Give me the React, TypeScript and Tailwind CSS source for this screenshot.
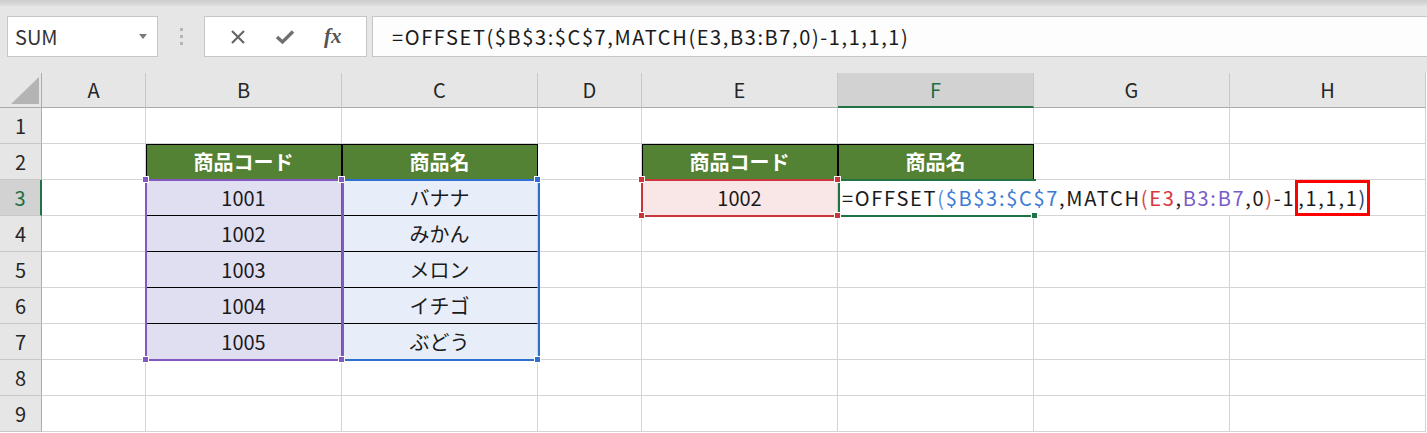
import type { ReactNode } from 'react';
import clsx from 'clsx';

// Column letters and widths used by the sheet grid
const COLS = ['A', 'B', 'C', 'D', 'E', 'F', 'G', 'H'];

const CODES = ['1001', '1002', '1003', '1004', '1005'];
const NAMES = ['バナナ', 'みかん', 'メロン', 'イチゴ', 'ぶどう'];

interface CellSpec {
  text?: ReactNode;
  className?: string;
}

// Returns content + style for a data cell (row 1-based, col 0-based A..H)
function getCell(row: number, col: number): CellSpec {
  const header = 'bg-[#548235] text-white font-bold border-r-black border-b-black shadow-[inset_1px_1px_0_#000]';
  if (row === 2) {
    if (col === 1 || col === 4) return { text: '商品コード', className: header };
    if (col === 2 || col === 5) return { text: '商品名', className: header };
  }
  if (row >= 3 && row <= 7) {
    const i = row - 3;
    const inner = row < 7 ? 'border-b-black' : '';
    if (col === 1) return { text: CODES[i], className: clsx('bg-[#e0dff2]', inner) };
    if (col === 2) return { text: NAMES[i], className: clsx('bg-[#e8eef9]', inner) };
  }
  if (row === 3 && col === 4) return { text: '1002', className: 'bg-[#f9e7e7]' };
  return {};
}

function Handle({ x, y, color }: { x: string; y: string; color: string }) {
  return <div className={clsx('absolute w-[7px] h-[7px] border border-white z-30', x, y, color)} />;
}

function Formula({ boxed }: { boxed?: boolean }) {
  return (
    <span className="tracking-[1.7px]">
      <span>=OFFSET</span>
      <span className="text-[#5b8fd6]">(</span>
      <span className="text-[#3c7bd4]">$B$3:$C$7</span>
      <span>,MATCH</span>
      <span className="text-[#d04a4a]">(</span>
      <span className="text-[#d9383a]">E3</span>
      <span>,</span>
      <span className="text-[#7a5cc8]">B3:B7</span>
      <span>,0</span>
      <span className="text-[#d04a4a]">)</span>
      <span>-1</span>
      {boxed ? (
        <span className="inline-flex items-center h-[36px] border-[3px] border-[#ff0000] -my-[2px]">
          <span>,1,1,1</span>
          <span className="text-[#24406e]">)</span>
        </span>
      ) : (
        <>
          <span>,1,1,1</span>
          <span>)</span>
        </>
      )}
    </span>
  );
}

function FormulaBar() {
  return (
    <div className="h-[73px] bg-[#e6e6e6] flex flex-col">
      <div className="h-[6px] bg-gradient-to-b from-[#cdcdcd] to-[#e0e0e0]" />
      <div className="mt-[10px] h-[41px] flex items-stretch">
        {/* Name box */}
        <div className="ml-[7px] w-[151px] bg-white border border-[#c6c6c6] flex items-center justify-between pl-[7px] pr-[10px]">
          <span className="text-[20px] text-[#333]">SUM</span>
          <svg width="8" height="5" viewBox="0 0 8 5">
            <path d="M0 0 H8 L4 5 Z" fill="#7a7a7a" />
          </svg>
        </div>
        {/* Grip dots */}
        <div className="w-[46px] flex flex-col items-center justify-center gap-[4px]">
          <div className="w-[3px] h-[3px] bg-[#b5b5b5]" />
          <div className="w-[3px] h-[3px] bg-[#b5b5b5]" />
          <div className="w-[3px] h-[3px] bg-[#b5b5b5]" />
        </div>
        {/* Cancel / enter / fx */}
        <div className="w-[163px] bg-white border border-[#c6c6c6] flex items-center justify-around px-[10px]">
          <svg width="16" height="16" viewBox="0 0 16 16">
            <path d="M2 2 L14 14 M14 2 L2 14" stroke="#666" strokeWidth="2.2" />
          </svg>
          <svg width="20" height="16" viewBox="0 0 20 16">
            <path d="M2 8 L7.5 13 L18 2.5" stroke="#707070" strokeWidth="3.4" fill="none" />
          </svg>
          <span className="font-[family-name:'Liberation_Serif',serif] italic font-bold text-[21px] text-[#555] leading-none">
            fx
          </span>
        </div>
        {/* Formula input */}
        <div className="ml-[5px] flex-1 bg-[#fdfdfd] border border-r-0 border-[#c6c6c6] flex items-center pl-[19px] text-[20px] text-[#1a1a1a]">
          <span className="tracking-[1.6px]">=OFFSET($B$3:$C$7,MATCH(E3,B3:B7,0)-1,1,1,1)</span>
        </div>
      </div>
    </div>
  );
}

function Sheet() {
  const rows = [1, 2, 3, 4, 5, 6, 7, 8, 9];
  return (
    <div className="relative grid grid-cols-[42px_104px_196px_196px_104px_196px_196px_196px_196px] grid-rows-[35px_repeat(9,36px)] bg-white">
      {/* corner */}
      <div className="relative bg-[#e6e6e6] border-r border-b border-[#ababab]">
        <svg className="absolute left-[11px] top-[4px]" width="28" height="27" viewBox="0 0 28 27">
          <path d="M0 27 L28 27 L28 0 Z" fill="#b4b4b4" />
        </svg>
      </div>
      {COLS.map((c) => (
        <div
          key={c}
          className={clsx(
            'flex items-center justify-center text-[20px] border-r border-r-[#c8c8c8]',
            c === 'F'
              ? 'bg-[#d2d2d2] text-[#1e6e42] border-b-2 border-b-[#217346]'
              : 'bg-[#e6e6e6] text-[#262626] border-b border-b-[#ababab]'
          )}
        >
          {c}
        </div>
      ))}
      {rows.map((r) => (
        <Row key={r} row={r} />
      ))}

      {/* range highlights drawn over the grid */}
      <div className="absolute left-[341px] top-[106px] w-[199px] h-[182px] border-2 border-[#2f6fd0] z-20 pointer-events-none" />
      <div className="absolute left-[145px] top-[106px] w-[199px] h-[182px] border-2 border-[#8259c0] z-20 pointer-events-none" />
      <div className="absolute left-[641px] top-[106px] w-[199px] h-[38px] border-2 border-[#c8363a] z-20 pointer-events-none" />

      {/* cell in edit mode: text spills across G and H */}
      <div className="absolute left-[838px] top-[107px] h-[35px] bg-white flex items-center pl-[4px] pr-[2px] whitespace-nowrap text-[20px] text-[#1a1a1a] z-10">
        <Formula boxed />
      </div>
      <div className="absolute left-[838px] top-[106px] w-[198px] h-[38px] border-2 border-r-0 border-[#217346] z-20 pointer-events-none" />

      <Handle x="left-[142px]" y="top-[103px]" color="bg-[#8259c0]" />
      <Handle x="left-[338px]" y="top-[103px]" color="bg-[#8259c0]" />
      <Handle x="left-[142px]" y="top-[283px]" color="bg-[#8259c0]" />
      <Handle x="left-[338px]" y="top-[283px]" color="bg-[#8259c0]" />
      <Handle x="left-[534px]" y="top-[103px]" color="bg-[#2f6fd0]" />
      <Handle x="left-[534px]" y="top-[283px]" color="bg-[#2f6fd0]" />
      <Handle x="left-[638px]" y="top-[103px]" color="bg-[#c8363a]" />
      <Handle x="left-[834px]" y="top-[103px]" color="bg-[#c8363a]" />
      <Handle x="left-[638px]" y="top-[139px]" color="bg-[#c8363a]" />
      <Handle x="left-[834px]" y="top-[139px]" color="bg-[#c8363a]" />
      <Handle x="left-[1031px]" y="top-[139px]" color="bg-[#217346]" />
    </div>
  );
}

function Row({ row }: { row: number }) {
  return (
    <>
      <div
        className={clsx(
          'flex items-center justify-center text-[20px] border-b border-b-[#c8c8c8]',
          row === 3
            ? 'bg-[#d2d2d2] text-[#1e6e42] border-r-2 border-r-[#217346]'
            : 'bg-[#e6e6e6] text-[#262626] border-r border-r-[#ababab]'
        )}
      >
        {row}
      </div>
      {COLS.map((_, col) => {
        const cell = getCell(row, col);
        return (
          <div
            key={col}
            className={clsx(
              'flex items-center justify-center text-[20px] text-[#1a1a1a] border-r border-b border-[#d4d4d4]',
              cell.className
            )}
          >
            {cell.text}
          </div>
        );
      })}
    </>
  );
}

export default function App() {
  return (
    <div className="w-[1427px] h-[433px] overflow-hidden bg-white font-[family-name:'Noto_Sans_CJK_JP',sans-serif]">
      <FormulaBar />
      <Sheet />
    </div>
  );
}
